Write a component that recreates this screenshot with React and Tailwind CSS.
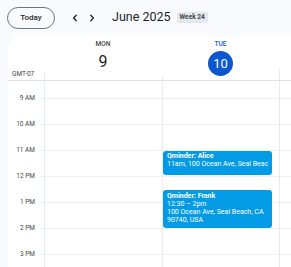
import React from "react";

const hours = ["9 AM", "10 AM", "11 AM", "12 PM", "1 PM", "2 PM", "3 PM"];

const ChevronLeft = () => (
  <svg width="10" height="10" viewBox="0 0 10 10" fill="none">
    <path d="M6.2 2.2L3.6 5l2.6 2.8" stroke="#1f1f1f" strokeWidth="1.3" strokeLinecap="round" strokeLinejoin="round" />
  </svg>
);

const ChevronRight = () => (
  <svg width="10" height="10" viewBox="0 0 10 10" fill="none">
    <path d="M3.8 2.2L6.4 5 3.8 7.8" stroke="#1f1f1f" strokeWidth="1.3" strokeLinecap="round" strokeLinejoin="round" />
  </svg>
);

const App = () => {
  return (
    <div
      className="w-[291px] h-[267px] overflow-hidden bg-[#f8fafd] flex flex-col text-[#1f1f1f]"
      style={{ fontFamily: "Roboto, 'Noto Sans', sans-serif" }}
    >
      {/* toolbar */}
      <div className="h-[35px] shrink-0 flex items-center pl-[7px]">
        <button className="w-[48px] h-[22px] rounded-full border border-[#747775] text-[8px] font-medium text-[#1f1f1f] flex items-center justify-center">
          Today
        </button>
        <div className="flex items-center gap-[7px] ml-[15px]">
          <ChevronLeft />
          <ChevronRight />
        </div>
        <div className="ml-[15px] text-[12.5px] leading-none">June 2025</div>
        <div className="ml-[6px] h-[11px] px-[3px] rounded-[2px] bg-[#e3e8ef] text-[6.5px] font-bold text-[#444746] flex items-center">
          Week 24
        </div>
      </div>

      {/* card */}
      <div className="ml-[8px] flex-1 bg-white rounded-tl-[14px] flex flex-col overflow-hidden">
        {/* day header */}
        <div className="h-[46px] shrink-0 grid grid-cols-[36px_118px_117px_1fr] border-b border-[#dde3ea]">
          <div className="flex flex-col justify-end">
            <div className="h-[11px] flex items-center pl-[4px] text-[6.5px] text-[#444746]">GMT-07</div>
          </div>
          <div className="flex flex-col">
            <div className="pt-[6px] text-center text-[6.5px] font-medium text-[#444746] leading-[7px]">MON</div>
            <div className="text-center text-[16px] leading-[20px] mt-[4px]">9</div>
            <div className="flex-1 border-l border-[#e8eaed]"></div>
          </div>
          <div className="flex flex-col">
            <div className="pt-[6px] text-center text-[6.5px] font-medium text-[#0b57d0] leading-[7px]">TUE</div>
            <div className="flex justify-center mt-[3px]">
              <div className="w-[25px] h-[25px] rounded-full bg-[#0b57d0] text-white text-[13px] flex items-center justify-center">
                10
              </div>
            </div>
            <div className="flex-1 border-l border-[#e8eaed]"></div>
          </div>
          <div className="flex flex-col">
            <div className="flex-1"></div>
            <div className="h-[11px] border-l border-[#e8eaed]"></div>
          </div>
        </div>

        {/* body */}
        <div className="flex-1 grid grid-cols-[36px_118px_117px_1fr]">
          <div className="flex flex-col">
            <div className="h-[17px] shrink-0"></div>
            {hours.map((h) => (
              <div key={h} className="h-[26px] shrink-0 flex justify-end">
                <span className="relative -top-[4px] h-[8px] pr-[5px] text-[6.5px] leading-[8px] text-[#444746] w-[32px] text-right">
                  {h}
                </span>
                <div className="w-[4px] border-t border-[#edf0f4]"></div>
              </div>
            ))}
          </div>
          {[0, 1, 2].map((c) => (
            <div key={c} className="relative border-l border-[#e8eaed] flex flex-col">
              <div className="h-[17px] shrink-0"></div>
              {hours.map((h) => (
                <div key={h} className="h-[26px] shrink-0 border-t border-[#edf0f4]"></div>
              ))}
              {c === 1 && (
                <>
                  <div className="absolute left-0 top-[70px] w-[109px] h-[24px] rounded-[3px] bg-[#039be5] text-white px-[4px] pt-[1px] text-[7px] leading-[8px] overflow-hidden">
                    <div className="font-bold whitespace-nowrap">Qminder: Alice</div>
                    <div className="whitespace-nowrap overflow-hidden">11am, 100 Ocean Ave, Seal Beach, CA</div>
                  </div>
                  <div className="absolute left-0 top-[109px] w-[109px] h-[38px] rounded-[3px] bg-[#039be5] text-white px-[4px] pt-[2px] text-[7px] leading-[8px] overflow-hidden">
                    <div className="font-bold">Qminder: Frank</div>
                    <div>12:30 – 2pm</div>
                    <div>100 Ocean Ave, Seal Beach, CA 90740, USA</div>
                  </div>
                </>
              )}
            </div>
          ))}
        </div>
      </div>
    </div>
  );
};

export default App;
